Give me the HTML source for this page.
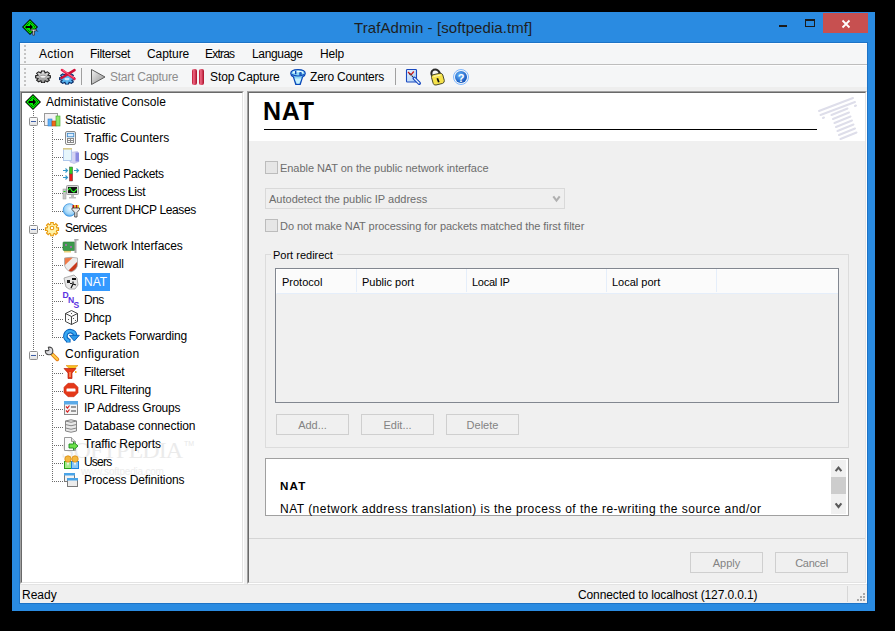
<!DOCTYPE html>
<html><head><meta charset="utf-8">
<style>
*{box-sizing:border-box;margin:0;padding:0}
html,body{width:895px;height:631px;overflow:hidden;background:#000;font-family:"Liberation Sans",sans-serif;}
.a{position:absolute}
#win{position:absolute;left:12px;top:12px;width:863px;height:599px;background:#2a8be1;}
.t{position:absolute;white-space:pre;line-height:1;color:#000}
.s12{font-size:12px}
.s11{font-size:11px}
.dis{color:#6d6d6d}
.cb{width:13px;height:13px;border:1px solid #bcbcbc;background:#e6e6e6}
.btn{width:73px;height:21px;border:1px solid #cfcfcf;background:#f0f0f0;font-size:11px;color:#838383;text-align:center;line-height:20px}
</style></head>
<body>
<div id="win"></div>
<!-- title bar -->
<div class="t" style="left:354px;top:20px;font-size:15px;color:#1e1e1e;letter-spacing:0.08px">TrafAdmin - [softpedia.tmf]</div>

<!-- client area -->
<div class="a" style="left:19px;top:42px;width:849px;height:562px;border:1px solid #1d73c6"></div>
<div class="a" style="left:20px;top:43px;width:847px;height:560px;background:#f0f0f0"></div>
<!-- menu bar -->
<div class="a" style="left:20px;top:43px;width:847px;height:21px;background:#f5f6f7;border-top:1px solid #fff"></div>
<div class="a" style="left:20px;top:64px;width:847px;height:1px;background:#bdbdbd"></div>
<div class="a" style="left:20px;top:65px;width:847px;height:1px;background:#fdfdfd"></div>
<!-- toolbar -->
<div class="a" style="left:20px;top:66px;width:847px;height:25px;background:#f5f6f7"></div>
<div class="a" style="left:20px;top:87px;width:847px;height:4px;background:#eeeeee"></div>

<!-- menu texts -->
<div class="t s12" style="left:39px;top:48px;letter-spacing:0.26px">Action</div>
<div class="t s12" style="left:90px;top:48px;letter-spacing:-0.29px">Filterset</div>
<div class="t s12" style="left:147px;top:48px;letter-spacing:-0.07px">Capture</div>
<div class="t s12" style="left:205px;top:48px;letter-spacing:-0.8px">Extras</div>
<div class="t s12" style="left:252px;top:48px;letter-spacing:-0.34px">Language</div>
<div class="t s12" style="left:320px;top:48px;letter-spacing:-0.13px">Help</div>

<!-- toolbar texts -->
<div class="t s12" style="left:110px;top:71px;color:#8d8d8d;letter-spacing:-0.24px">Start Capture</div>
<div class="t s12" style="left:210px;top:71px;letter-spacing:-0.09px">Stop Capture</div>
<div class="t s12" style="left:310px;top:71px;letter-spacing:-0.2px">Zero Counters</div>

<!-- tree view -->
<div class="a" style="left:20px;top:91px;width:224px;height:493px;background:#fff;border-top:1px solid #a0a0a0;border-left:1px solid #a0a0a0;border-right:1px solid #fff;border-bottom:1px solid #fff"></div>
<div class="a" style="left:21px;top:92px;width:222px;height:491px;border-top:1px solid #696969;border-left:1px solid #696969;border-right:1px solid #e3e3e3;border-bottom:1px solid #e3e3e3"></div>

<div class="t" style="left:61px;top:438px;font-family:'Liberation Serif',serif;font-size:24px;color:#ebebeb;letter-spacing:-0.9px;transform:scaleY(0.95)">SOFTPEDIA</div>
<div class="t" style="left:184px;top:440px;font-size:7px;color:#e8e8e8">TM</div>
<div class="t" style="left:81px;top:467px;font-size:10px;color:#ececec;letter-spacing:-0.2px">www.softpedia.com</div>
<div class="t s12" style="left:46px;top:96px;letter-spacing:0.06px">Administative Console</div>
<div class="t s12" style="left:65px;top:114px;letter-spacing:-0.175px">Statistic</div>
<div class="t s12" style="left:84px;top:132px;letter-spacing:0.04px">Traffic Counters</div>
<div class="t s12" style="left:84px;top:150px;letter-spacing:-0.433px">Logs</div>
<div class="t s12" style="left:84px;top:168px;letter-spacing:-0.308px">Denied Packets</div>
<div class="t s12" style="left:84px;top:186px;letter-spacing:-0.345px">Process List</div>
<div class="t s12" style="left:84px;top:204px;letter-spacing:-0.389px">Current DHCP Leases</div>
<div class="t s12" style="left:65px;top:222px;letter-spacing:-0.586px">Services</div>
<div class="t s12" style="left:84px;top:240px;letter-spacing:-0.076px">Network Interfaces</div>
<div class="t s12" style="left:84px;top:258px;letter-spacing:-0.2px">Firewall</div>
<div class="a" style="left:82px;top:273px;width:28px;height:18px;background:#3399ff"></div>
<div class="t s12" style="left:84px;top:276px;color:#fff">NAT</div>
<div class="t s12" style="left:84px;top:294px;letter-spacing:-0.5px">Dns</div>
<div class="t s12" style="left:84px;top:312px;letter-spacing:-0.233px">Dhcp</div>
<div class="t s12" style="left:84px;top:330px;letter-spacing:-0.165px">Packets Forwarding</div>
<div class="t s12" style="left:65px;top:348px;letter-spacing:0.233px">Configuration</div>
<div class="t s12" style="left:84px;top:366px;letter-spacing:-0.262px">Filterset</div>
<div class="t s12" style="left:84px;top:384px;letter-spacing:-0.2px">URL Filtering</div>
<div class="t s12" style="left:84px;top:402px;letter-spacing:-0.256px">IP Address Groups</div>
<div class="t s12" style="left:84px;top:420px;letter-spacing:-0.067px">Database connection</div>
<div class="t s12" style="left:84px;top:438px;letter-spacing:-0.079px">Traffic Reports</div>
<div class="t s12" style="left:84px;top:456px;letter-spacing:-0.8px">Users</div>
<div class="t s12" style="left:84px;top:474px;letter-spacing:-0.122px">Process Definitions</div>
<svg class="a" style="left:0;top:0" width="895" height="631"><defs><linearGradient id="expg" x1="0" y1="0" x2="0" y2="1"><stop offset="0" stop-color="#fff"/><stop offset="1" stop-color="#e0e0e0"/></linearGradient></defs><path d="M33.5 111V356M39 121.5H44M52.5 129V212M54 139.5H63M54 157.5H63M54 175.5H63M54 193.5H63M54 211.5H63M39 229.5H44M52.5 237V338M54 247.5H63M54 265.5H63M54 283.5H63M54 301.5H63M54 319.5H63M54 337.5H63M39 355.5H44M52.5 363V482M54 373.5H63M54 391.5H63M54 409.5H63M54 427.5H63M54 445.5H63M54 463.5H63M54 481.5H63" stroke="#6b6b6b" stroke-dasharray="1 1" fill="none"/><rect x="29.5" y="117.5" width="8" height="8" rx="1" fill="url(#expg)" stroke="#8f8f8f"/><rect x="31" y="121" width="5" height="1" fill="#3d5ea6"/><rect x="29.5" y="225.5" width="8" height="8" rx="1" fill="url(#expg)" stroke="#8f8f8f"/><rect x="31" y="229" width="5" height="1" fill="#3d5ea6"/><rect x="29.5" y="351.5" width="8" height="8" rx="1" fill="url(#expg)" stroke="#8f8f8f"/><rect x="31" y="355" width="5" height="1" fill="#3d5ea6"/></svg>

<!-- right panel -->
<div class="a" style="left:247px;top:91px;width:620px;height:493px;background:#f0f0f0;border-top:1px solid #a0a0a0;border-left:1px solid #a0a0a0;border-right:1px solid #fff;border-bottom:1px solid #fff"></div>
<div class="a" style="left:248px;top:92px;width:618px;height:491px;border-top:1px solid #696969;border-left:1px solid #696969;border-right:1px solid #e3e3e3;border-bottom:1px solid #e3e3e3"></div>
<div class="a" style="left:249px;top:93px;width:616px;height:48px;background:#fff"></div>
<div class="t" style="left:263px;top:99px;font-size:25px;font-weight:bold;letter-spacing:0.7px">NAT</div>
<div class="a" style="left:264px;top:129px;width:553px;height:1px;background:#000"></div>

<!-- checkboxes -->
<div class="a cb" style="left:265px;top:161px"></div>
<div class="t s11 dis" style="left:280px;top:163px;letter-spacing:-0.05px">Enable NAT on the public network interface</div>
<div class="a" style="left:265px;top:188px;width:300px;height:21px;border:1px solid #d9d9d9;background:#efefef"></div>
<div class="t s11 dis" style="left:269px;top:194px">Autodetect the public IP address</div>
<svg class="a" style="left:552px;top:195px" width="9" height="8"><path d="M1.3 1.3L4.5 5.6L7.7 1.3" stroke="#b0b0b0" stroke-width="2.1" fill="none"/></svg>
<div class="a cb" style="left:265px;top:219px"></div>
<div class="t s11 dis" style="left:280px;top:221px;letter-spacing:-0.055px">Do not make NAT processing for packets matched the first filter</div>

<!-- group box -->
<div class="a" style="left:265px;top:254px;width:584px;height:194px;border:1px solid #dcdcdc"></div>
<div class="a" style="left:271px;top:248px;width:66px;height:14px;background:#f0f0f0"></div>
<div class="t s11" style="left:273px;top:250px">Port redirect</div>
<!-- list view -->
<div class="a" style="left:275px;top:268px;width:564px;height:135px;border:1px solid #828790;background:#f0f0f0"></div>
<div class="a" style="left:276px;top:269px;width:562px;height:25px;background:#fbfbfb;border-top:1px solid #fff;border-left:1px solid #fff;border-bottom:1px solid #e5eefa"></div>
<div class="a" style="left:356px;top:269px;width:1px;height:23px;background:#e5eefa"></div>
<div class="a" style="left:466px;top:269px;width:1px;height:23px;background:#e5eefa"></div>
<div class="a" style="left:606px;top:269px;width:1px;height:23px;background:#e5eefa"></div>
<div class="a" style="left:716px;top:269px;width:1px;height:23px;background:#e5eefa"></div>
<div class="t s11" style="left:282px;top:277px">Protocol</div>
<div class="t s11" style="left:362px;top:277px">Public port</div>
<div class="t s11" style="left:472px;top:277px;letter-spacing:-0.28px">Local IP</div>
<div class="t s11" style="left:612px;top:277px">Local port</div>
<!-- buttons -->
<div class="a btn" style="left:276px;top:414px">Add...</div>
<div class="a btn" style="left:361px;top:414px">Edit...</div>
<div class="a btn" style="left:446px;top:414px">Delete</div>

<!-- info box -->
<div class="a" style="left:265px;top:458px;width:584px;height:58px;border:1px solid #a0a0a0;background:#fff"></div>
<div class="t" style="left:280px;top:480px;font-size:11.6px;font-weight:bold;letter-spacing:1.2px">NAT</div>
<div class="t" style="left:280px;top:503px;font-size:12px;letter-spacing:0.48px">NAT (network address translation) is the process of the re-writing the source and/or</div>
<div class="a" style="left:831px;top:460px;width:15px;height:54px;background:#f0f0f0"></div>
<div class="a" style="left:831px;top:477px;width:15px;height:17px;background:#cdcdcd"></div>
<svg class="a" style="left:831px;top:460px" width="15" height="54"><path d="M4.6 11.2L7.5 7.6L10.4 11.2M4.6 43.4L7.5 47L10.4 43.4" stroke="#5a5a5a" stroke-width="2.1" fill="none"/></svg>

<!-- bottom separator and buttons -->
<div class="a" style="left:249px;top:538px;width:616px;height:1px;background:#d5d5d5"></div>
<div class="a btn" style="left:690px;top:552px">Apply</div>
<div class="a btn" style="left:775px;top:552px;letter-spacing:-0.25px">Cancel</div>

<!-- status bar -->
<div class="a" style="left:20px;top:584px;width:847px;height:1px;background:#e3e3e3"></div>
<div class="t s12" style="left:22px;top:589px">Ready</div>
<div class="t s12" style="left:578px;top:589px;letter-spacing:-0.12px">Connected to localhost (127.0.0.1)</div>
<svg class="a" style="left:0;top:0" width="895" height="631">
<defs>
<linearGradient id="gGrey" x1="0" y1="0" x2="0" y2="1"><stop offset="0" stop-color="#e8e8e8"/><stop offset="1" stop-color="#8a8a8a"/></linearGradient>
<linearGradient id="gPlay" x1="0" y1="0" x2="1" y2="1"><stop offset="0" stop-color="#f4f4f4"/><stop offset="1" stop-color="#8c8c8c"/></linearGradient>
<linearGradient id="gRed" x1="0" y1="0" x2="1" y2="0"><stop offset="0" stop-color="#b80f2e"/><stop offset="0.35" stop-color="#f06a85"/><stop offset="1" stop-color="#a80a25"/></linearGradient>
<radialGradient id="gHelp" cx="0.4" cy="0.35" r="0.7"><stop offset="0" stop-color="#6ab8ff"/><stop offset="1" stop-color="#0a4cb5"/></radialGradient>
<radialGradient id="gGlobe" cx="0.55" cy="0.4" r="0.7"><stop offset="0" stop-color="#e6f6ff"/><stop offset="0.6" stop-color="#9fd4f7"/><stop offset="1" stop-color="#2f8ee0"/></radialGradient>
<linearGradient id="gFw" x1="0" y1="0" x2="1" y2="1"><stop offset="0" stop-color="#f26b3a"/><stop offset="1" stop-color="#b52a10"/></linearGradient>
</defs>

<!-- title icon -->
<g transform="translate(22,19)">
<polygon points="8,0 16,8 8,16 0,8" fill="#000"/>
<polygon points="8,1.3 14.7,8 8,14.7 1.3,8" fill="#00f000"/>
<polygon points="8,3 13,8 8,13 3,8" fill="none" stroke="#000" stroke-width="0.9" stroke-dasharray="1 1"/>
<rect x="4" y="7" width="5" height="2" fill="#000"/><polygon points="8,5 11,8 8,11" fill="#000"/>
<path d="M8.8,10.2h5.6v1.7h-2V16.2h-1.6V11.9h-2z" fill="#e4e0dc" stroke="#1a1a1a" stroke-width="0.7"/><path d="M14.6,11.2l1.2,1.4" stroke="#222" stroke-width="0.8"/>
</g>

<!-- title buttons -->
<rect x="779" y="25" width="8" height="2" fill="#1b1b1b"/>
<rect x="805.5" y="19.5" width="9" height="7" fill="none" stroke="#1b1b1b" stroke-width="1"/>
<rect x="805" y="19" width="10" height="2" fill="#1b1b1b"/>
<rect x="823" y="13" width="45" height="20" fill="#c75050"/>
<path d="M842.5 20.5L849.5 27.5M849.5 20.5L842.5 27.5" stroke="#fff" stroke-width="1.8"/>

<!-- menu grip -->
<g fill="#c4c4c4">
<rect x="24" y="45" width="2" height="2"/><rect x="24" y="49" width="2" height="2"/><rect x="24" y="53" width="2" height="2"/><rect x="24" y="57" width="2" height="2"/><rect x="24" y="61" width="2" height="2"/>
<rect x="24" y="68" width="2" height="2"/><rect x="24" y="72" width="2" height="2"/><rect x="24" y="76" width="2" height="2"/><rect x="24" y="80" width="2" height="2"/><rect x="24" y="84" width="2" height="2"/>
</g>

<!-- toolbar icons -->
<g transform="translate(43,77.2) scale(1.2,0.95)">
<path d="M-1.2,-6.5h2.4l0.6,2 1.8,-1.2 1.7,1.7 -1.2,1.8 2,0.6v2.4l-2,0.6 1.2,1.8 -1.7,1.7 -1.8,-1.2 -0.6,2h-2.4l-0.6,-2 -1.8,1.2 -1.7,-1.7 1.2,-1.8 -2,-0.6v-2.4l2,-0.6 -1.2,-1.8 1.7,-1.7 1.8,1.2z" fill="url(#gGrey)" stroke="#1e1e1e" stroke-width="1"/>
<ellipse cx="0" cy="-0.5" rx="2.6" ry="1.6" fill="#f4f4f4" stroke="#8a8a8a" stroke-width="0.7"/>
</g>
<g transform="translate(67,79) scale(1.2,0.9)">
<path d="M-1.2,-6.5h2.4l0.6,2 1.8,-1.2 1.7,1.7 -1.2,1.8 2,0.6v2.4l-2,0.6 1.2,1.8 -1.7,1.7 -1.8,-1.2 -0.6,2h-2.4l-0.6,-2 -1.8,1.2 -1.7,-1.7 1.2,-1.8 -2,-0.6v-2.4l2,-0.6 -1.2,-1.8 1.7,-1.7 1.8,1.2z" fill="#56b4f0" stroke="#082a66" stroke-width="1"/>
<ellipse cx="0" cy="0" rx="2.2" ry="1.5" fill="#cfe8ff"/>
</g>
<path d="M62,70 L74.5,78.8" stroke="#e8204a" stroke-width="2.6" stroke-linecap="round"/>
<path d="M74.5,70.2 L61.5,78" stroke="#d01038" stroke-width="2.6" stroke-linecap="round"/>
<path d="M62.5,69.8 L74,78" stroke="#ff7090" stroke-width="0.8"/>
<rect x="81" y="68" width="1" height="17" fill="#a0a0a0"/>
<polygon points="91.5,69.5 105,77 91.5,84.5" fill="url(#gPlay)" stroke="#5c5c5c" stroke-width="1"/>
<rect x="192" y="69" width="5" height="16" rx="2" fill="url(#gRed)"/>
<rect x="199" y="69" width="5" height="16" rx="2" fill="url(#gRed)"/>
<g>
<path d="M290.8,73.5 Q290.8,69.6 298,69.6 Q305.2,69.6 305.2,73.5 Q305.2,75.5 302.5,77 L300.2,84.4 H295.8 L293.5,77 Q290.8,75.5 290.8,73.5Z" fill="#8fd8f4" stroke="#0a47b8" stroke-width="1.3"/>
<path d="M294.5,78.5 L297,83.5 H299 L301.5,78.5Z" fill="#c8f0ff"/>
<path d="M291.8,74.5 Q298,77.5 304.2,74.5" fill="none" stroke="#0a47b8" stroke-width="1.1"/>
<path d="M293,72.5 Q298,70.5 303,72.5" fill="none" stroke="#e8fbff" stroke-width="1.5"/>
<rect x="295" y="71" width="1.4" height="3.2" fill="#0a47b8"/><rect x="299.2" y="72" width="2.6" height="3.5" rx="1" fill="#1a5cc0"/>
<!-- separator 2 -->
<rect x="395" y="68" width="1" height="17" fill="#a0a0a0"/>
<linearGradient id="gProbe" x1="0" y1="0" x2="1" y2="1"><stop offset="0" stop-color="#e8f4ff"/><stop offset="1" stop-color="#a8cdf4"/></linearGradient>
<rect x="406.5" y="69.5" width="10" height="12.5" rx="0.8" fill="url(#gProbe)" stroke="#1848c0" stroke-width="1.1"/>
<path d="M408,72 L410.8,74.8 M413.8,71.5 L411,74.8" stroke="#d01818" stroke-width="1.3"/>
<path d="M409.5,73.5 L414,78" stroke="#222" stroke-width="1.2" stroke-dasharray="1 0.8"/>
<path d="M414.2,78.2 L419.3,83.3" stroke="#1848c0" stroke-width="3.4" stroke-linecap="round"/>
<path d="M414.5,78.5 L419,83" stroke="#e8f6ff" stroke-width="1.3" stroke-linecap="round"/>
<path d="M432,76 Q430.2,71.5 433.5,69.8 Q437.5,68.6 439.5,72.5 L440.5,75" fill="none" stroke="#2a2a2a" stroke-width="2"/>
<path d="M431.5,77.5 Q431,75.5 433,74.8 L440,73.2 Q442,73 442.8,75 L444.3,80.5 Q444.6,82.6 442.6,83.4 L436,85 Q433.8,85.4 433.2,83.4Z" fill="#f6e24a" stroke="#4a4a2a" stroke-width="1"/>
<path d="M433.5,76.5 L440.5,75" stroke="#fff8b8" stroke-width="1.2"/>
<path d="M437.3,78.3 L438.8,82.3" stroke="#111" stroke-width="1.7"/>
<g>
<circle cx="461" cy="77" r="7.5" fill="none" stroke="#7fb8ff" stroke-width="1"/>
<circle cx="461" cy="77" r="6" fill="url(#gHelp)"/>
<text x="461" y="81.5" font-family="Liberation Sans" font-weight="bold" font-size="11" fill="#fff" text-anchor="middle">?</text>
</g>

<!-- header watermark -->
<g stroke="#dedeea" stroke-width="2" stroke-linecap="round">
<path d="M819,111 L853,98 M820.5,115 L855,102 M831.5,115 L847.5,108.5 M833,119 L849,112.5 M834.5,123 L850.5,116.5 M836,127 L852,120.5 M837.5,131 L853.5,124.5 M839,135 L855,128.5 M840.5,139 L856.5,132.5 M823,118 L824,117.5 M855,106 L856,105.5"/>
</g>

<!-- status grip -->
<rect x="847" y="586" width="1" height="16" fill="#d7d7d7"/>
<g fill="#a8a8a8">
<rect x="863" y="593" width="2" height="2"/><rect x="860" y="596" width="2" height="2"/><rect x="863" y="596" width="2" height="2"/>
<rect x="857" y="599" width="2" height="2"/><rect x="860" y="599" width="2" height="2"/><rect x="863" y="599" width="2" height="2"/>
</g>
<!-- row0 diamond -->
<g transform="translate(25,94)">
<polygon points="8,0 16,8 8,16 0,8" fill="#000"/>
<polygon points="8,1.3 14.7,8 8,14.7 1.3,8" fill="#00f000"/>
<polygon points="8,3 13,8 8,13 3,8" fill="none" stroke="#000" stroke-width="0.9" stroke-dasharray="1 1"/>
<rect x="4" y="7" width="5" height="2" fill="#000"/><polygon points="8,4.8 11.2,8 8,11.2" fill="#000"/>
</g>
<!-- row1 statistic (y0=112) -->
<rect x="44.5" y="113.5" width="13" height="12" fill="#f4f2f4" stroke="#9a9a9a"/>
<rect x="48" y="119" width="4" height="7" fill="#5fb0f5" stroke="#2f7fd0" stroke-width="0.6"/>
<rect x="52" y="121" width="4" height="5" fill="#f06a1a" stroke="#c04a08" stroke-width="0.6"/>
<rect x="56" y="116" width="4" height="10" fill="#8ee86a" stroke="#3e9e2a" stroke-width="0.6"/>
<!-- row2 calculator (y0=130) -->
<rect x="65.5" y="131.5" width="10" height="13" rx="1.5" fill="#fafafa" stroke="#8a8a8a"/>
<rect x="67.3" y="133.3" width="6.5" height="3.5" fill="#dceeff" stroke="#3a86c8" stroke-width="0.9"/>
<rect x="67.5" y="138.5" width="6" height="4" fill="none" stroke="#8a8a8a"/><path d="M67.5,140.5h6M70.5,138.5v4" stroke="#8a8a8a" stroke-width="1"/>
<!-- row3 logs (y0=148) -->
<path d="M70,152.5 L77.5,151.5 L79,161.5 L74,163.5 L70,162Z" fill="#d4d4f4" stroke="#b4b4e4" stroke-width="0.6"/>
<rect x="75.5" y="152.5" width="3.5" height="9" fill="#8a8ae0"/>
<rect x="63.5" y="148.5" width="8" height="12" fill="#e6f6fc" stroke="#b0c8ec"/>
<rect x="63" y="148" width="9" height="1.6" fill="#d8c888"/>
<!-- row4 denied (y0=166) -->
<rect x="69.3" y="167" width="3.4" height="7" fill="#33cc22" stroke="#555" stroke-width="0.5"/>
<rect x="69.3" y="174" width="3.4" height="7" fill="#ee1a1a" stroke="#555" stroke-width="0.5"/>
<g stroke="#3399cc" stroke-width="1.1" fill="none">
<path d="M63,170.5h4.5M65.5,168.5l2,2-2,2M63,177.5h4.5M65.5,175.5l2,2-2,2M74,170.5h4.5M76.5,168.5l2,2-2,2"/>
</g>
<!-- row5 process list (y0=184) -->
<rect x="66.5" y="185.5" width="12" height="9" rx="1" fill="#d8d8d8" stroke="#a0a0a0"/>
<rect x="68" y="187" width="9" height="6" fill="#111"/>
<path d="M68,190 L70,188 L72,191 L74,192 L77,189" stroke="#22ee22" stroke-width="1.1" fill="none"/>
<path d="M71,195h3v2h2v1.5h-7V197h2z" fill="#bdbdbd"/>
<rect x="63" y="189" width="3" height="10" fill="#c8c8c8" stroke="#999" stroke-width="0.5"/>
<rect x="63.5" y="191" width="2" height="1" fill="#22cc22"/>
<!-- row6 dhcp leases (y0=202) -->
<circle cx="69.5" cy="210" r="6.3" fill="url(#gGlobe)" stroke="#3a94e0" stroke-width="0.8"/>
<rect x="72.5" y="205" width="1.8" height="3" fill="#c01010"/><rect x="74.3" y="205" width="1.5" height="3" fill="#f0d010"/><rect x="75.8" y="205" width="1.8" height="3" fill="#c01010"/><rect x="77.6" y="205" width="1.4" height="3" fill="#f0d010"/>
<path d="M72,208h7.5v1.5l-2.5,3v4.5h-2.3v-4.5l-2.7-3z" fill="#e8e8e8" stroke="#333" stroke-width="0.8"/>
<!-- row7 services gear (y0=220) -->
<g transform="translate(52,228) scale(0.8)">
<path d="M-1.6,-6.8h3.2v2.1l1.6,0.7 1.5,-1.5 2.2,2.2 -1.5,1.5 0.7,1.6h2.1v3.2h-2.1l-0.7,1.6 1.5,1.5 -2.2,2.2 -1.5,-1.5 -1.6,0.7v2.1h-3.2v-2.1l-1.6,-0.7 -1.5,1.5 -2.2,-2.2 1.5,-1.5 -0.7,-1.6h-2.1v-3.2h2.1l0.7,-1.6 -1.5,-1.5 2.2,-2.2 1.5,1.5 1.6,-0.7z" fill="#fff3a8" stroke="#e8980c" stroke-width="1.35"/>
<circle cx="0" cy="0" r="2.2" fill="#fff" stroke="#e8980c" stroke-width="1.4"/>
</g>
<!-- row8 network card (y0=238) -->
<rect x="64" y="250" width="7" height="2.5" fill="#e8d078"/>
<rect x="63" y="242" width="12" height="8.5" rx="0.8" fill="#3c9a4c" stroke="#2a7a38" stroke-width="0.6"/>
<rect x="65" y="244" width="2" height="2" fill="#9a70a0"/><rect x="70" y="246" width="2" height="2" fill="#9a70a0"/>
<rect x="74.5" y="239" width="2" height="14" fill="#a8a8a8"/><rect x="74.5" y="239" width="4" height="1.5" fill="#a8a8a8"/>
<!-- row9 firewall (y0=256) -->
<clipPath id="cShield"><path d="M64.5,258 Q71,256.5 77.5,258 V264 Q77.5,269.5 71,272 Q64.5,269.5 64.5,264Z"/></clipPath>
<g clip-path="url(#cShield)">
<rect x="64" y="256" width="14" height="16" fill="#ececec"/>
<polygon points="63,256 74.5,256 63,267" fill="#f07a48"/>
<polygon points="79,260 79,273 66,273" fill="#c8381a"/>
</g>
<path d="M64.5,258 Q71,256.5 77.5,258 V264 Q77.5,269.5 71,272 Q64.5,269.5 64.5,264Z" fill="none" stroke="#a8a8a8" stroke-width="0.8"/>
<!-- row10 nat (y0=274) -->
<path d="M65,283 L64,278 L69,276.5 L74,275 L77,278 L78,285 L75,289 L69,289 L66,287Z" fill="#e8e8e8" stroke="#9a9a9a" stroke-width="0.8"/>
<rect x="72" y="278" width="4" height="2" fill="#111"/>
<rect x="67" y="280" width="3" height="3" fill="#222"/>
<path d="M73,281.5 L73,284 L71,288 M73,284 L76,285" stroke="#111" stroke-width="1.2" fill="none"/>
<rect x="70" y="283" width="2" height="1" fill="#222"/>
<!-- row11 dns (y0=292) -->
<g fill="#5a32e0" font-family="Liberation Sans" font-weight="bold" font-size="8.6">
<text x="62.6" y="297.8">D</text><text x="67.9" y="303.4">N</text><text x="73.6" y="308.4">S</text></g>
<!-- row12 dhcp dice (y0=310) -->
<path d="M65.5,313.5 L71.5,310.5 L77.5,313.5 V321.5 L71.5,324.5 L65.5,321.5Z M65.5,313.5 L71.5,316.5 L77.5,313.5 M71.5,316.5 V324.5" fill="#fafafa" stroke="#333" stroke-width="0.9"/>
<g fill="#555"><rect x="71" y="313" width="1" height="1"/><rect x="73" y="318" width="1" height="1"/><rect x="75" y="320" width="1" height="1"/><rect x="68" y="319" width="1" height="1"/></g>
<!-- row13 packets forwarding (y0=328) -->
<path d="M68.3,342.5 V340.5 A4.9,4.9 0 1 1 75.2,336" fill="none" stroke="#0a64c0" stroke-width="4.6"/>
<path d="M68.3,342 V340.5 A4.9,4.9 0 1 1 75.2,336" fill="none" stroke="#3aaaf2" stroke-width="2.4"/>
<polygon points="69.3,335.3 79.3,335.3 74.3,341" fill="#2a98e8" stroke="#0a64c0" stroke-width="1" stroke-linejoin="round"/>
<!-- row14 configuration wrench (y0=346) -->
<path d="M52,354 L57.3,359.3" stroke="#e8801a" stroke-width="3.8" stroke-linecap="round"/>
<path d="M52.2,354.2 L57.2,359.2" stroke="#ffd24a" stroke-width="1.8" stroke-linecap="round"/>
<path d="M48.3,347.2 Q52.8,346.8 52.8,351 Q52.8,355 48.8,354.8 Q45.2,354.6 45.3,350.6 L47.6,350.6 Q48.8,350.6 49,349.8 Z" fill="#dcdce0" stroke="#4a4a4a" stroke-width="1.1" stroke-linejoin="round"/>
<!-- row15 filterset (y0=364) -->
<path d="M66,365.5 H78 L74,369 H70Z" fill="#f8c020" stroke="#e89010" stroke-width="0.6"/>
<path d="M64,368.5 H76 L72,373 V378.5 H68 V373Z" fill="#e83818" stroke="#b02010" stroke-width="0.7"/>
<path d="M69,372 h2 v5 h-2z" fill="#f88050"/>
<rect x="75" y="371" width="1.5" height="2" fill="#f8b020"/>
<!-- row16 url filtering (y0=382) -->
<polygon points="68,383.3 74,383.3 78,387.3 78,392.7 74,396.7 68,396.7 64,392.7 64,387.3" fill="#e43818" stroke="#c82810" stroke-width="0.6"/>
<rect x="66.5" y="388.5" width="9" height="3" rx="0.6" fill="#fff"/>
<!-- row17 ip groups (y0=400) -->
<rect x="64.5" y="401.5" width="13" height="13" fill="#f4f4f4" stroke="#8a8a8a"/>
<rect x="64" y="401" width="14" height="3.5" fill="#5aaae8"/>
<path d="M66,406.5 L67.5,408 L69.5,405.5 M66,410.5 L67.5,412 L69.5,409.5" stroke="#d82020" stroke-width="1.2" fill="none"/>
<rect x="71" y="406" width="5" height="2" fill="#9a9a9a"/><rect x="71" y="410" width="5" height="2" fill="#9a9a9a"/>
<!-- row18 database (y0=418) -->
<g fill="#e8e8e8" stroke="#7a7a7a" stroke-width="0.9">
<path d="M65.5,421 Q71,418.5 76.5,421 V431 Q71,433.5 65.5,431Z"/>
<path d="M65.5,421 Q71,423.5 76.5,421 M65.5,424.5 Q71,427 76.5,424.5 M65.5,428 Q71,430.5 76.5,428" fill="none"/>
</g>
<!-- row19 traffic reports (y0=436) -->
<path d="M64.5,437.5 H71.5 L75.5,441.5 V450.5 H64.5Z" fill="#fafafa" stroke="#9a9a9a"/>
<path d="M71.5,437.5 V441.5 H75.5" fill="#e0e0e0" stroke="#9a9a9a"/>
<path d="M69,444 h4.5 v-2 l4.5,4 -4.5,4 v-2 h-4.5z" fill="#6ce04a" stroke="#1e8a1e" stroke-width="0.9"/>
<!-- row20 users (y0=454) -->
<rect x="64.5" y="461.5" width="7" height="7" fill="#a4e88a" stroke="#28a018"/>
<rect x="71.5" y="461.5" width="7" height="7" fill="#8cc8f4" stroke="#1a80e0"/>
<path d="M66.5,461 L68,466 L69.5,461Z M73.5,461 L75,466 L76.5,461Z" fill="#fff"/>
<circle cx="68" cy="459" r="3.2" fill="#f4b840" stroke="#d88a10" stroke-width="0.8"/>
<circle cx="75" cy="459" r="3.2" fill="#f4b840" stroke="#d88a10" stroke-width="0.8"/>
<!-- row21 process definitions (y0=472) -->
<rect x="64.5" y="473.5" width="10" height="8" fill="#f4f4f4" stroke="#7a7a7a"/>
<rect x="64" y="473" width="11" height="2.5" fill="#4aa4e8"/>
<rect x="67.5" y="478.5" width="10" height="8" fill="#ececec" stroke="#7a7a7a"/>
<rect x="67" y="478" width="11" height="2.5" fill="#4aa4e8"/>
</svg>

</body></html>
